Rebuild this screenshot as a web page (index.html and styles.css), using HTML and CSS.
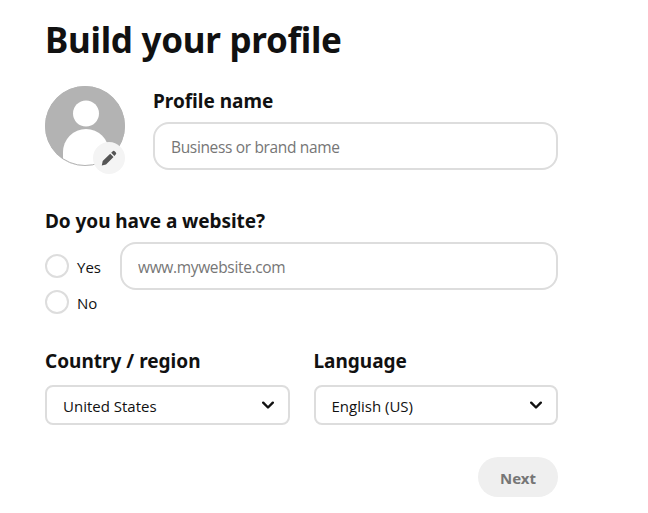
FILE: index.html
```html
<!DOCTYPE html>
<html lang="en">
<head>
    <meta charset="UTF-8">
    <meta name="viewport" content="width=device-width, initial-scale=1.0">
    <title>Build your profile</title>
    <link rel="stylesheet" href="styles.css">
</head>
<body>
<form class="profile">
    <h1 class="title">Build your profile</h1>
    <div class="name-row">
        <div class="avatar">
            <svg class="avatar-img" viewBox="0 0 80 80">
                <clipPath id="round"><circle cx="40" cy="40" r="40"/></clipPath>
                <g clip-path="url(#round)">
                    <rect width="80" height="80" fill="#b3b3b3"/>
                    <circle cx="41" cy="27.500" r="13" fill="#fff"/>
                    <path d="M18 80V66a23 23 0 0 1 46 0v14z" fill="#fff"/>
                </g>
                <circle cx="40" cy="40" r="39.500" fill="none" stroke="#b3b3b3"/>
            </svg>
            <span class="edit">
                <svg width="16" height="16" viewBox="0 0 16 16">
                    <path d="M.8 15.400l.9-4.300L9.200 3.700l3.300 3.200L5 14.400zM10.200 2.700l1.300-1.300a1.700 1.700 0 0 1 2.400 0l.8.8a1.700 1.700 0 0 1 0 2.400l-1.300 1.300z" fill="#555"/>
                </svg>
            </span>
        </div>
        <div class="field">
            <label class="label" for="name">Profile name</label>
            <input class="input" id="name" type="text" placeholder="Business or brand name">
        </div>
    </div>
    <div class="label site-label">Do you have a website?</div>
    <div class="site-row">
        <div class="radios">
            <label class="radio"><input type="radio" name="site"><span>Yes</span></label>
            <label class="radio"><input type="radio" name="site"><span>No</span></label>
        </div>
        <input class="input" type="text" placeholder="www.mywebsite.com">
    </div>
    <div class="select-row">
        <div class="field">
            <div class="label">Country / region</div>
            <div class="select">
                <span>United States</span>
                <svg width="12" height="8" viewBox="0 0 12 8"><path d="M1.200 1.700L6 6.500l4.800-4.800"/></svg>
            </div>
        </div>
        <div class="field">
            <div class="label">Language</div>
            <div class="select">
                <span>English (US)</span>
                <svg width="12" height="8" viewBox="0 0 12 8"><path d="M1.200 1.700L6 6.500l4.800-4.800"/></svg>
            </div>
        </div>
    </div>
    <button class="next" type="button">Next</button>
</form>
</body>
</html>
```
FILE: styles.css
```css
* {
    box-sizing: border-box;
}
body {
    margin: 0;
    background: #fff;
    color: #111;
    font-family: "Open Sans", "Noto Sans", sans-serif;
}
.profile {
    display: flex;
    flex-direction: column;
    width: 558px;
    padding: 16px 0 0 45px;
}
.title {
    margin: 0;
    font: 700 35px/48px "Noto Sans", sans-serif;
    letter-spacing: -0.28px;
    white-space: nowrap;
}
.name-row {
    display: flex;
    gap: 28px;
    margin-top: 22px;
}
.avatar {
    position: relative;
    width: 80px;
    height: 80px;
    flex: none;
}
.avatar-img {
    display: block;
    width: 80px;
    height: 80px;
}
.edit {
    position: absolute;
    left: 48px;
    top: 56px;
    display: flex;
    align-items: center;
    justify-content: center;
    width: 32px;
    height: 32px;
    border-radius: 50%;
    background: #f4f4f4;
}
.field {
    flex: 1;
}
.label {
    display: block;
    font: 700 19px/24px "Noto Sans", sans-serif;
    white-space: nowrap;
}
.name-row .label {
    margin: 3px 0 9px;
}
.input {
    display: block;
    width: 100%;
    height: 48px;
    padding: 2px 16px 0;
    border: 2px solid #ddd;
    border-radius: 16px;
    background: #fff;
    font: 15.5px "Open Sans", "Noto Sans", sans-serif;
    letter-spacing: -0.34px;
    outline: none;
}
.input::placeholder {
    color: #767676;
}
.site-label {
    margin-top: 39px;
    letter-spacing: -0.06px;
}
.site-row {
    display: flex;
    margin-top: 9px;
}
.radios {
    display: flex;
    flex-direction: column;
    gap: 12px;
    width: 75px;
    flex: none;
    padding-top: 12px;
}
.radio {
    display: flex;
    align-items: center;
    gap: 8px;
    height: 24px;
    font-size: 15px;
}
.radio span {
    padding-top: 2px;
}
.radio input {
    appearance: none;
    width: 24px;
    height: 24px;
    margin: 0;
    border: 2px solid #ddd;
    border-radius: 50%;
}
.select-row {
    display: flex;
    gap: 24px;
    margin-top: 35px;
}
.select {
    display: flex;
    align-items: center;
    justify-content: space-between;
    height: 40px;
    margin-top: 12px;
    padding: 0 14px 0 16px;
    border: 2px solid #ddd;
    border-radius: 8px;
    font-size: 15px;
}
.select span {
    padding-top: 2px;
}
.select path {
    fill: none;
    stroke: #111;
    stroke-width: 2.4;
    stroke-linecap: round;
    stroke-linejoin: round;
}
.next {
    align-self: flex-end;
    width: 80px;
    height: 40px;
    margin-top: 32px;
    padding: 2px 0 0;
    border: 0;
    border-radius: 20px;
    background: #efefef;
    color: #767676;
    font: bold 15px "Noto Sans", sans-serif;
}
```
